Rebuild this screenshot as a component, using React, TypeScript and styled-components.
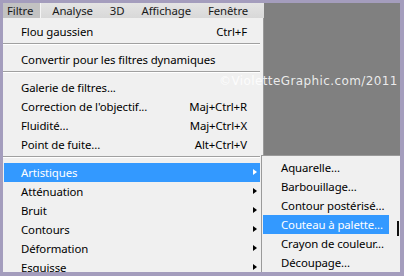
import React from "react";
import styled, { createGlobalStyle } from "styled-components";

const GlobalStyle = createGlobalStyle`
  body {
    margin: 0;
    background: #a49dbd;
  }
`;

const mainItems: { label: string; shortcut?: string; sub?: boolean; active?: boolean; sep?: boolean }[] = [
  { label: "Flou gaussien", shortcut: "Ctrl+F" },
  { label: "", sep: true },
  { label: "Convertir pour les filtres dynamiques" },
  { label: "", sep: true },
  { label: "Galerie de filtres..." },
  { label: "Correction de l'objectif...", shortcut: "Maj+Ctrl+R" },
  { label: "Fluidité...", shortcut: "Maj+Ctrl+X" },
  { label: "Point de fuite...", shortcut: "Alt+Ctrl+V" },
  { label: "", sep: true },
  { label: "Artistiques", sub: true, active: true },
  { label: "Atténuation", sub: true },
  { label: "Bruit", sub: true },
  { label: "Contours", sub: true },
  { label: "Déformation", sub: true },
  { label: "Esquisse", sub: true },
];

const subItems = [
  "Aquarelle...",
  "Barbouillage...",
  "Contour postérisé...",
  "Couteau à palette...",
  "Crayon de couleur...",
  "Découpage...",
];

const App = () => {
  return (
    <>
      <GlobalStyle />
      <Frame>
        <LeftCol>
          <MenuBar>
            <BarItem $active>Filtre</BarItem>
            <BarItem>Analyse</BarItem>
            <BarItem>3D</BarItem>
            <BarItem>Affichage</BarItem>
            <BarItem>Fenêtre</BarItem>
          </MenuBar>
          <Menu>
            {mainItems.map((item, i) =>
              item.sep ? (
                <Separator key={i} />
              ) : (
                <Row key={i} $active={item.active}>
                  <Label>{item.label}</Label>
                  {item.shortcut && <Shortcut>{item.shortcut}</Shortcut>}
                  <ArrowCell>{item.sub && <Arrow $active={item.active} />}</ArrowCell>
                </Row>
              )
            )}
          </Menu>
        </LeftCol>
        <RightCol>
          <Canvas />
          <SubMenu>
            {subItems.map((label) => (
              <SubRow key={label} $active={label.startsWith("Couteau")}>
                {label}
              </SubRow>
            ))}
            <CursorMark />
          </SubMenu>
        </RightCol>
        <Watermark>©VioletteGraphic.com/2011</Watermark>
      </Frame>
    </>
  );
};

const Frame = styled.div`
  position: relative;
  box-sizing: border-box;
  width: 404px;
  height: 276px;
  padding: 3px 4px 4px 3px;
  display: flex;
  overflow: hidden;
  background: #a49dbd;
  font-family: "Noto Sans", "Open Sans", sans-serif;
  font-size: 11.4px;
  letter-spacing: -0.1px;
  color: #000;
`;

const LeftCol = styled.div`
  width: 261px;
  display: flex;
  flex-direction: column;
  flex-shrink: 0;
`;

const MenuBar = styled.div`
  height: 15px;
  display: flex;
  align-items: stretch;
  background: linear-gradient(#e4e4e4, #d8d8d8);
  line-height: 15px;
`;

const BarItem = styled.div<{ $active?: boolean }>`
  padding: 0 8px 0 9px;
  color: #1a1a1a;
  background: ${(p) => (p.$active ? "#c2c2c2" : "transparent")};
  border-right: ${(p) => (p.$active ? "1px solid #f4f4f4" : "none")};

  &:first-child {
    padding: 0 7px 0 4px;
    margin-right: 2px;
  }
`;

const Menu = styled.div`
  flex: 1;
  padding: 4px 3px 0 1px;
  background: #f0f0f0;
  border-right: 1px solid #9a9a9a;
  overflow: hidden;
`;

const Row = styled.div<{ $active?: boolean }>`
  height: 19px;
  display: flex;
  align-items: center;
  padding-left: 17px;
  background: ${(p) => (p.$active ? "#3399ff" : "transparent")};
  color: ${(p) => (p.$active ? "#fff" : "#000")};
  white-space: nowrap;
`;

const Label = styled.span`
  flex: 1;
`;

const Shortcut = styled.span``;

const ArrowCell = styled.span`
  width: 13px;
  height: 19px;
  position: relative;
`;

const Arrow = styled.span<{ $active?: boolean }>`
  position: absolute;
  left: 6px;
  top: 6px;
  width: 0;
  height: 0;
  border-top: 3.5px solid transparent;
  border-bottom: 3.5px solid transparent;
  border-left: 4px solid ${(p) => (p.$active ? "#fff" : "#000")};
`;

const Separator = styled.div`
  height: 9px;
  box-sizing: border-box;
  padding-top: 2px;

  &::before {
    content: "";
    display: block;
    height: 1px;
    background: #a0a0a0;
    border-bottom: 1px solid #ffffff;
    margin-left: -1px;
  }
`;

const RightCol = styled.div`
  flex: 1;
  min-width: 0;
  display: flex;
  flex-direction: column;
`;

const Canvas = styled.div`
  height: 157px;
  background: #808080;
`;

const SubMenu = styled.div`
  position: relative;
  flex: 1;
  margin-left: -3px;
  padding: 2px 11px 0 1px;
  background: #f0f0f0;
  border-left: 1px solid #9a9a9a;
  border-top: 1px solid #9a9a9a;
`;

const SubRow = styled.div<{ $active?: boolean }>`
  width: 126px;
  height: 19px;
  line-height: 19px;
  box-sizing: border-box;
  padding-left: 18px;
  white-space: nowrap;
  background: ${(p) => (p.$active ? "#3399ff" : "transparent")};
  color: ${(p) => (p.$active ? "#fff" : "#000")};
`;

const CursorMark = styled.div`
  position: absolute;
  right: 1px;
  top: 65px;
  width: 2px;
  height: 15px;
  background: #111;
`;

const Watermark = styled.div`
  position: absolute;
  left: 219px;
  top: 74px;
  font-family: "DejaVu Sans", sans-serif;
  font-size: 12px;
  letter-spacing: 0.4px;
  color: rgba(255, 255, 255, 0.85);
  white-space: nowrap;
`;

export default App;
